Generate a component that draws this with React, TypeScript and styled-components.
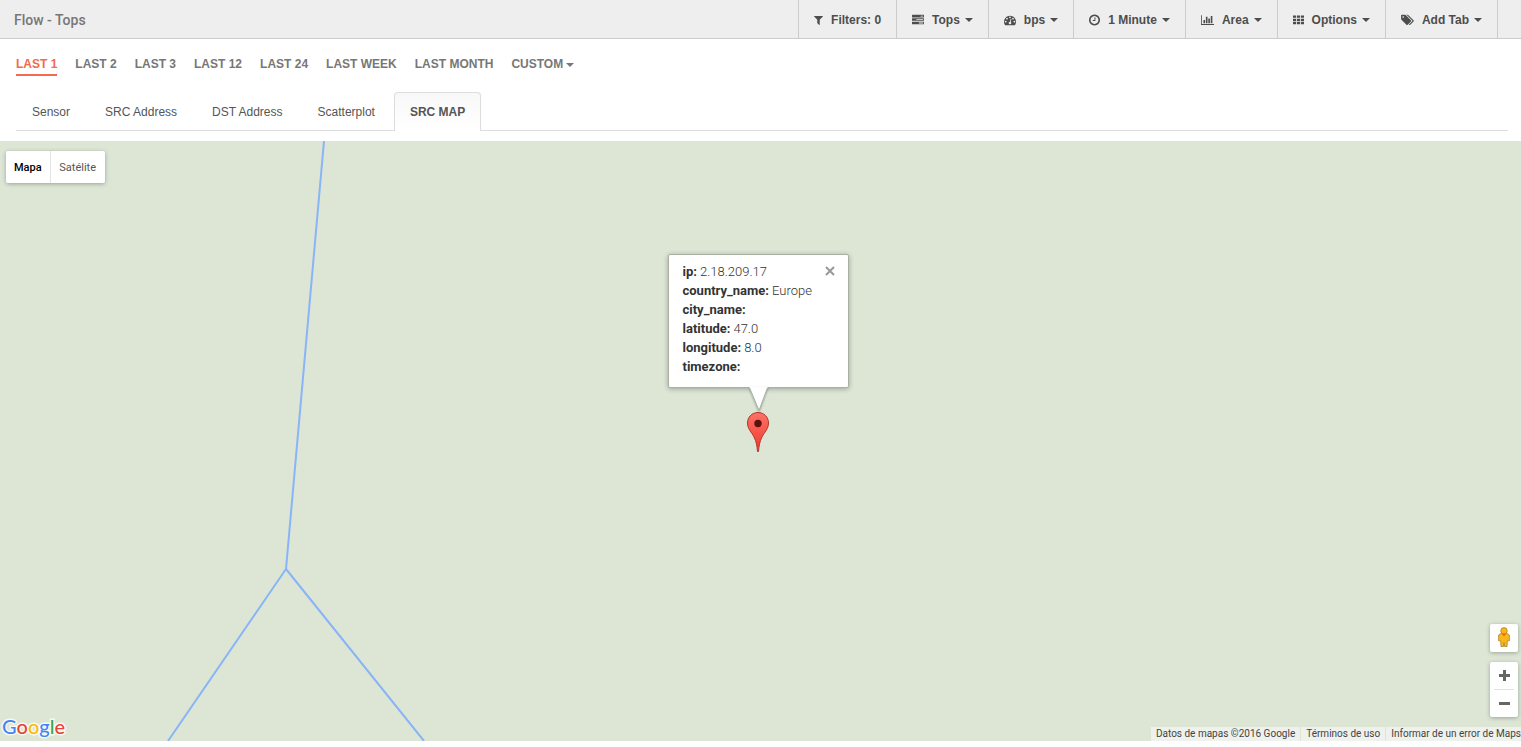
import React from "react";
import styled, { createGlobalStyle } from "styled-components";

const GlobalStyle = createGlobalStyle`
  *, *::before, *::after { box-sizing: border-box; }
  body {
    margin: 0;
    background: #fff;
    color: #555;
    font: 12px/18px "Liberation Sans", Arial, sans-serif;
  }
  button { font: inherit; color: inherit; margin: 0; cursor: pointer; }
  a { color: inherit; text-decoration: none; }
`;

const Page = styled.div`
  display: flex;
  flex-direction: column;
  min-height: 100vh;
  padding-bottom: 6px;
`;

/* ---------- Top bar ---------- */

const TopBar = styled.header`
  display: flex;
  justify-content: space-between;
  height: 39px;
  padding: 0 23px 0 14px;
  background: #eee;
  border-bottom: 1px solid #ccc;
`;

const Title = styled.h1`
  margin: 0;
  font: 500 14px/40px Roboto, sans-serif;
  color: #777;
`;

const Toolbar = styled.nav`
  display: flex;
  border-right: 1px solid #ccc;
`;

const ToolButton = styled.button`
  display: flex;
  align-items: center;
  padding: 2px 15px 0;
  border: 0;
  border-left: 1px solid #ccc;
  background: none;
  font-weight: bold;
  color: #4d4d4d;
  white-space: nowrap;
`;

const ToolIcon = styled.svg`
  display: block;
  height: 12px;
  margin-right: 8px;
  fill: currentColor;
`;

const Caret = styled.span<{ $gap: number }>`
  display: inline-block;
  vertical-align: middle;
  margin-left: ${(p) => p.$gap}px;
  border: 4px solid transparent;
  border-top-color: currentColor;
  border-bottom: 0;
`;

/* ---------- Time ranges ---------- */

const Ranges = styled.nav`
  display: flex;
  gap: 18px;
  padding: 16px 16px 0;
`;

const RangeLink = styled.a<{ $active?: boolean }>`
  height: 21px;
  font-weight: bold;
  text-transform: uppercase;
  white-space: nowrap;
  color: ${(p) => (p.$active ? "#f4694f" : "#777")};
  border-bottom: 2px solid ${(p) => (p.$active ? "#f4694f" : "transparent")};
`;

/* ---------- Tabs ---------- */

const Tabs = styled.nav`
  display: flex;
  gap: 3px;
  height: 39px;
  margin: 16px 13px 10px 16px;
  border-bottom: 1px solid #ddd;
`;

const Tab = styled.a<{ $active?: boolean }>`
  height: 39px;
  padding: 0 15px;
  line-height: 38px;
  white-space: nowrap;
  border: 1px solid ${(p) => (p.$active ? "#ddd" : "transparent")};
  border-bottom: 0;
  border-radius: 4px 4px 0 0;
  background: ${(p) => (p.$active ? "linear-gradient(#f8f8f8, #fff)" : "none")};
  font-weight: ${(p) => (p.$active ? "bold" : "normal")};
`;

/* ---------- Map ---------- */

const MapArea = styled.main`
  position: relative;
  flex: 1;
  min-height: 400px;
  overflow: hidden;
  background: #dde6d5;
  font-family: Roboto, sans-serif;
`;

const Borders = styled.svg`
  position: absolute;
  left: 0;
  top: 0;
  width: 600px;
  height: 100%;
  fill: none;
  stroke: #8ab4f8;
  stroke-width: 2;
`;

const MapTypes = styled.div`
  position: absolute;
  left: 6px;
  top: 10px;
  display: flex;
  border-radius: 2px;
  box-shadow: 0 1px 4px rgba(0, 0, 0, 0.3);
`;

const MapType = styled.button<{ $active?: boolean }>`
  height: 32px;
  min-width: ${(p) => (p.$active ? 43 : 55)}px;
  padding: 2px 8px 0;
  border: 0;
  border-left: ${(p) => (p.$active ? "0" : "1px solid #e4e4e4")};
  border-radius: ${(p) => (p.$active ? "2px 0 0 2px" : "0 2px 2px 0")};
  background: #fff;
  font-size: 11px;
  font-weight: ${(p) => (p.$active ? 500 : 400)};
  color: ${(p) => (p.$active ? "#000" : "#565656")};
`;

const Marker = styled.div`
  position: absolute;
  left: calc(50% - 93px);
  top: 113px;
  display: flex;
  flex-direction: column;
  align-items: center;
`;

const InfoWindow = styled.section`
  position: relative;
  width: 181px;
  height: 134px;
  padding: 7px 14px;
  border: 1px solid #abb0a4;
  border-radius: 2px;
  background: #fff;
  box-shadow: 0 1px 5px rgba(0, 0, 0, 0.3);
`;

const Details = styled.dl`
  margin: 0;
  font-size: 13px;
  line-height: 19px;
  font-weight: 300;
  color: #333;
`;

const Detail = styled.div`
  display: flex;
  gap: 3px;
  dt { font-weight: 700; }
  dd { margin: 0; }
`;

const CloseButton = styled.button`
  position: absolute;
  right: 13px;
  top: 11px;
  display: flex;
  padding: 0;
  border: 0;
  background: none;
`;

const Stem = styled.svg`
  position: relative;
  display: block;
  margin-top: -1px;
  filter: drop-shadow(0 1px 1px rgba(0, 0, 0, 0.3));
`;

const Pin = styled.svg`
  display: block;
`;

const Controls = styled.div`
  position: absolute;
  right: 3px;
  bottom: 24px;
  display: flex;
  flex-direction: column;
  gap: 10px;
`;

const ControlBox = styled.div`
  display: flex;
  flex-direction: column;
  width: 28px;
  border-radius: 2px;
  background: #fff;
  box-shadow: 0 1px 4px rgba(0, 0, 0, 0.3);
`;

const ControlButton = styled.button`
  display: grid;
  place-items: center;
  height: 27px;
  padding: 0;
  border: 0;
  background: none;
  color: #666;
`;

const StreetButton = styled(ControlButton)`
  height: 28px;
  padding-bottom: 2px;
`;

const Divider = styled.hr`
  width: 20px;
  height: 1px;
  margin: 0 auto;
  border: 0;
  background: #e0e0e0;
`;

const Logo = styled.a`
  position: absolute;
  left: 2px;
  bottom: 3px;
  font: 500 20px/24px Lato, sans-serif;
  -webkit-text-stroke: 3px rgba(255, 255, 255, 0.75);
  paint-order: stroke fill;
`;

const Letter = styled.span<{ $color: string }>`
  color: ${(p) => p.$color};
`;

const Credits = styled.footer`
  position: absolute;
  right: 0;
  bottom: 0;
  display: flex;
  gap: 1px;
  font-size: 10px;
  line-height: 14px;
  color: #444;
`;

const creditStyle = `
  padding: 0 5px;
  background: rgba(245, 245, 245, 0.7);
  white-space: nowrap;
`;
const Credit = styled.span`${creditStyle}`;
const CreditLink = styled.a`
  ${creditStyle}
  &:last-child { padding-right: 0; }
`;

/* ---------- Data ---------- */

type Tool = { label: string; width: number; box: string; path: string; caret?: boolean };

const tools: Tool[] = [
  {
    label: "Filters: 0",
    width: 9,
    box: "192 0 1408 1792",
    path: "M1595 295q17 41-14 70l-493 493v742q0 42-39 59-13 5-25 5-27 0-45-19l-256-256q-19-19-19-45v-486l-493-493q-31-29-14-70 17-39 59-39h1280q42 0 59 39z",
  },
  {
    label: "Tops",
    width: 12,
    box: "0 0 1792 1792",
    caret: true,
    path: "M1024 1408h640v-128h-640v128zm-384-512h1024v-128h-1024v128zm640-512h384v-128h-384v128zm512 832v256q0 26-19 45t-45 19h-1664q-26 0-45-19t-19-45v-256q0-26 19-45t45-19h1664q26 0 45 19t19 45zm0-512v256q0 26-19 45t-45 19h-1664q-26 0-45-19t-19-45v-256q0-26 19-45t45-19h1664q26 0 45 19t19 45zm0-512v256q0 26-19 45t-45 19h-1664q-26 0-45-19t-19-45v-256q0-26 19-45t45-19h1664q26 0 45 19t19 45z",
  },
  {
    label: "bps",
    width: 12,
    box: "0 0 1792 1792",
    caret: true,
    path: "M384 1152q0-53-37.5-90.5t-90.5-37.5-90.5 37.5-37.5 90.5 37.5 90.5 90.5 37.5 90.5-37.5 37.5-90.5zm192-448q0-53-37.5-90.5t-90.5-37.5-90.5 37.5-37.5 90.5 37.5 90.5 90.5 37.5 90.5-37.5 37.5-90.5zm428 481l101-382q6-26-7.5-48.5t-38.5-29.5-48 6.5-30 39.5l-101 382q-60 5-107 43.5t-63 98.5q-20 77 20 146t117 89 146-20 89-117q16-60-6-117t-72-91zm660-33q0-53-37.5-90.5t-90.5-37.5-90.5 37.5-37.5 90.5 37.5 90.5 90.5 37.5 90.5-37.5 37.5-90.5zm-640-640q0-53-37.5-90.5t-90.5-37.5-90.5 37.5-37.5 90.5 37.5 90.5 90.5 37.5 90.5-37.5 37.5-90.5zm448 192q0-53-37.5-90.5t-90.5-37.5-90.5 37.5-37.5 90.5 37.5 90.5 90.5 37.5 90.5-37.5 37.5-90.5zm320 448q0 261-141 483-19 29-54 29h-1402q-35 0-54-29-141-221-141-483 0-182 71-348t191-286 286-191 348-71 348 71 286 191 191 286 71 348z",
  },
  {
    label: "1 Minute",
    width: 11,
    box: "128 64 1536 1664",
    caret: true,
    path: "M1024 544v448q0 14-9 23t-23 9h-320q-14 0-23-9t-9-23v-64q0-14 9-23t23-9h224v-352q0-14 9-23t23-9h64q14 0 23 9t9 23zm416 352q0-148-73-273t-198-198-273-73-273 73-198 198-73 273 73 273 198 198 273 73 273-73 198-198 73-273zm224 0q0 209-103 385.5t-279.5 279.5-385.5 103-385.5-103-279.5-279.5-103-385.5 103-385.5 279.5-279.5 385.5-103 385.5 103 279.5 279.5 103 385.5z",
  },
  {
    label: "Area",
    width: 13,
    box: "0 0 2048 1792",
    caret: true,
    path: "M640 896v512h-256v-512h256zm384-512v1024h-256v-1024h256zm1024 1152v128h-2048v-1536h128v1408h1920zm-640-896v768h-256v-768h256zm384-384v1152h-256v-1152h256z",
  },
  {
    label: "Options",
    width: 11,
    box: "0 0 12 12",
    caret: true,
    path: "M0 1h3.4v2.6H0zM4.3 1h3.4v2.6H4.3zM8.6 1H12v2.6H8.6zM0 4.5h3.4v2.6H0zM4.3 4.5h3.4v2.6H4.3zM8.6 4.5H12v2.6H8.6zM0 8h3.4v2.6H0zM4.3 8h3.4v2.6H4.3zM8.6 8H12v2.6H8.6z",
  },
  {
    label: "Add Tab",
    width: 13,
    box: "0 0 1920 1792",
    caret: true,
    path: "M448 448q0-53-37.5-90.5t-90.5-37.5-90.5 37.5-37.5 90.5 37.5 90.5 90.5 37.5 90.5-37.5 37.5-90.5zm1067 576q0 53-37 90l-491 492q-39 37-91 37-53 0-90-37l-715-716q-38-37-64.5-101t-26.5-117v-416q0-52 38-90t90-38h416q53 0 117 26.5t102 64.5l715 714q37 39 37 91zm384 0q0 53-37 90l-491 492q-39 37-91 37-36 0-59-14t-53-45l470-470q37-37 37-90 0-52-37-91l-715-714q-38-38-102-64.5t-117-26.5h224q53 0 117 26.5t102 64.5l715 714q37 39 37 91z",
  },
];

const ranges = ["Last 1", "Last 2", "Last 3", "Last 12", "Last 24", "Last week", "Last month", "Custom"];
const tabs = ["Sensor", "SRC Address", "DST Address", "Scatterplot", "SRC MAP"];

const details = [
  ["ip", "2.18.209.17"],
  ["country_name", "Europe"],
  ["city_name", ""],
  ["latitude", "47.0"],
  ["longitude", "8.0"],
  ["timezone", ""],
];

const logoLetters = [
  ["G", "#4285f4"],
  ["o", "#ea4335"],
  ["o", "#fbbc05"],
  ["g", "#4285f4"],
  ["l", "#34a853"],
  ["e", "#ea4335"],
];

export default function App() {
  return (
    <Page>
      <GlobalStyle />
      <TopBar>
        <Title>Flow - Tops</Title>
        <Toolbar>
          {tools.map((t) => (
            <ToolButton key={t.label} type="button">
              <ToolIcon viewBox={t.box} width={t.width} aria-hidden="true">
                <path d={t.path} />
              </ToolIcon>
              {t.label}
              {t.caret && <Caret $gap={5} />}
            </ToolButton>
          ))}
        </Toolbar>
      </TopBar>

      <Ranges>
        {ranges.map((r, i) => (
          <RangeLink key={r} href="#" $active={i === 0}>
            {r}
            {r === "Custom" && <Caret $gap={3} />}
          </RangeLink>
        ))}
      </Ranges>

      <Tabs>
        {tabs.map((t) => (
          <Tab key={t} href="#" $active={t === "SRC MAP"}>
            {t}
          </Tab>
        ))}
      </Tabs>

      <MapArea>
        <Borders aria-hidden="true">
          <path d="M324 0L286 428L168 600M286 428L424 600" />
        </Borders>

        <MapTypes>
          <MapType type="button" $active>Mapa</MapType>
          <MapType type="button">Satélite</MapType>
        </MapTypes>

        <Marker>
          <InfoWindow>
            <Details>
              {details.map(([name, value]) => (
                <Detail key={name}>
                  <dt>{name}:</dt>
                  <dd>{value}</dd>
                </Detail>
              ))}
            </Details>
            <CloseButton type="button" aria-label="Cerrar">
              <svg width="10" height="10" viewBox="0 0 10 10" stroke="#999" strokeWidth="2">
                <path d="M1 1L9 9M9 1L1 9" />
              </svg>
            </CloseButton>
          </InfoWindow>
          <Stem width="20" height="25" viewBox="0 0 20 25" aria-hidden="true">
            <path d="M1 0H20L11 23.500Z" fill="#fff" />
            <path d="M1.500 .5L11 23.500L19.500 .5" fill="none" stroke="#abb0a4" />
          </Stem>
          <Pin width="22" height="40" viewBox="0 0 22 40" aria-hidden="true">
            <defs>
              <linearGradient id="pin" x1="0" y1="0" x2="0" y2="1">
                <stop offset="0" stopColor="#fc7268" />
                <stop offset="1" stopColor="#f2392c" />
              </linearGradient>
            </defs>
            <path
              d="M11 .5C5 .5.500 5 .5 11C.5 17 4.500 20 7 25C9.500 30 10 34 10.500 39.500H11.500C12 34 12.500 30 15 25C17.500 20 21.500 17 21.500 11C21.500 5 17 .5 11 .5Z"
              fill="url(#pin)"
              stroke="#b3382c"
            />
            <circle cx="11" cy="11.500" r="3.700" fill="#5b120d" />
          </Pin>
        </Marker>

        <Logo href="#" aria-label="Google">
          {logoLetters.map(([letter, color], i) => (
            <Letter key={i} $color={color}>{letter}</Letter>
          ))}
        </Logo>

        <Controls>
          <ControlBox>
            <StreetButton type="button" aria-label="Street View">
              <svg width="12" height="20" viewBox="0 0 12 20">
                <path
                  d="M3 6.500L.6 8V13.800H2.600L3 19.500H5.600L6 15.500L6.400 19.500H9L9.400 13.800H11.400V8L9 6.500Z"
                  fill="#fbb61a"
                  stroke="#a8852f"
                  strokeWidth=".8"
                />
                <circle cx="6" cy="3.800" r="3.200" fill="#fbb61a" stroke="#a8852f" strokeWidth=".8" />
                <path d="M3.600 6.800H8.400L6 9.800Z" fill="#e8751a" />
              </svg>
            </StreetButton>
          </ControlBox>
          <ControlBox>
            <ControlButton type="button" aria-label="Acercar">
              <svg width="11" height="11" viewBox="0 0 11 11" fill="currentColor">
                <path d="M4 0H7V4H11V7H7V11H4V7H0V4H4Z" />
              </svg>
            </ControlButton>
            <Divider />
            <ControlButton type="button" aria-label="Alejar">
              <svg width="11" height="3" viewBox="0 0 11 3" fill="currentColor">
                <path d="M0 0H11V3H0Z" />
              </svg>
            </ControlButton>
          </ControlBox>
        </Controls>

        <Credits>
          <Credit>Datos de mapas ©2016 Google</Credit>
          <CreditLink href="#">Términos de uso</CreditLink>
          <CreditLink href="#">Informar de un error de Maps</CreditLink>
        </Credits>
      </MapArea>
    </Page>
  );
}
